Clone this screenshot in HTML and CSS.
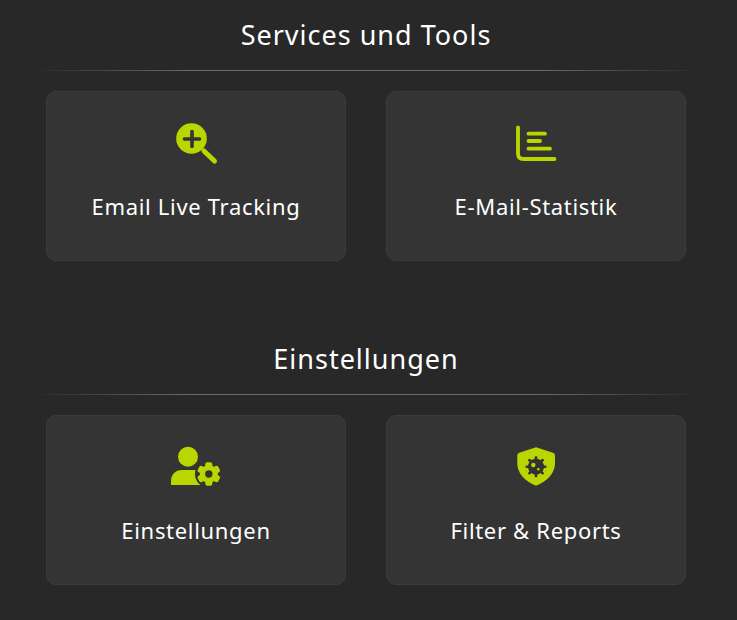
FILE: index.html
```html
<!DOCTYPE html>
<html lang="de">
<head>
<meta charset="utf-8">
<title>Services und Tools</title>
<link rel="stylesheet" href="styles.css">
</head>
<body>
<main class="page">
  <section class="section">
    <h2 class="title">Services und Tools</h2>
    <div class="rule"></div>
    <div class="cards">
      <a class="card">
        <svg class="icon" viewBox="0 0 50 50" width="50" height="50">
          <circle cx="20.500" cy="18.500" r="15.300" fill="#bad600"/>
          <path d="M33 31l10.500 10" stroke="#bad600" stroke-width="5" stroke-linecap="round" fill="none"/>
          <path d="M21 11.500v15M13.500 19h15" stroke="#333" stroke-width="3.600" stroke-linecap="round" fill="none"/>
        </svg>
        <span class="label">Email Live Tracking</span>
      </a>
      <a class="card">
        <svg class="icon" viewBox="0 0 50 50" width="50" height="50">
          <path d="M7 7.500v26q0 5.500 5.500 5.500h31" stroke="#bad600" stroke-width="3.800" stroke-linecap="round" fill="none"/>
          <path d="M17.500 13.700h16.500M17.500 21h11.500M17.500 28.700h21.500" stroke="#bad600" stroke-width="3.800" stroke-linecap="round" fill="none"/>
        </svg>
        <span class="label">E-Mail-Statistik</span>
      </a>
    </div>
  </section>
  <section class="section">
    <h2 class="title">Einstellungen</h2>
    <div class="rule"></div>
    <div class="cards">
      <a class="card">
        <svg class="icon" viewBox="0 0 50 50" width="50" height="50">
          <circle cx="17" cy="12.700" r="10" fill="#bad600"/>
          <path d="M0 41v-4c0-6.500 4.500-11 11-11h12c4 0 7 1 9 3v12z" fill="#bad600"/>
          <circle cx="37.800" cy="30" r="13.800" fill="#333"/>
          <g fill="#bad600">
            <circle cx="37.800" cy="30" r="9"/>
            <rect x="34.300" y="18.200" width="7" height="23.600" rx="2"/>
            <rect x="34.300" y="18.200" width="7" height="23.600" rx="2" transform="rotate(60 37.800 30)"/>
            <rect x="34.300" y="18.200" width="7" height="23.600" rx="2" transform="rotate(120 37.800 30)"/>
          </g>
          <circle cx="37.800" cy="30" r="3.700" fill="#333"/>
        </svg>
        <span class="label">Einstellungen</span>
      </a>
      <a class="card">
        <svg class="icon" viewBox="0 0 50 50" width="50" height="50">
          <path d="M25 3.300l17 5.400q2 .7 2 2.800v7.500c0 10-7 18-19 22.700C13 37 6.300 29 6.300 19v-7.500q0-2.100 2-2.800z" fill="#bad600"/>
          <g fill="#333">
            <circle cx="25" cy="22.700" r="8"/>
            <rect x="23.700" y="12.200" width="2.600" height="21" rx="1"/>
            <rect x="23.700" y="12.200" width="2.600" height="21" rx="1" transform="rotate(45 25 22.700)"/>
            <rect x="23.700" y="12.200" width="2.600" height="21" rx="1" transform="rotate(90 25 22.700)"/>
            <rect x="23.700" y="12.200" width="2.600" height="21" rx="1" transform="rotate(135 25 22.700)"/>
          </g>
          <circle cx="22.300" cy="21" r="2.200" fill="#bad600"/>
          <circle cx="27.300" cy="25.300" r="1.300" fill="#bad600"/>
        </svg>
        <span class="label">Filter &amp; Reports</span>
      </a>
    </div>
  </section>
</main>
</body>
</html>
```
FILE: styles.css
```css
html, body {
  margin: 0;
  padding: 0;
  height: 620px;
  overflow: hidden;
  background: #282828;
}
.page {
  width: 732px;
  display: flex;
  flex-direction: column;
  gap: 34px;
  padding-top: 14px;
  font-family: "Noto Sans", sans-serif;
  color: #fff;
}
.section {
  display: flex;
  flex-direction: column;
  height: 290px;
}
.title {
  margin: 0;
  height: 42px;
  line-height: 42px;
  text-align: center;
  font-size: 27px;
  font-weight: 400;
  letter-spacing: 1px;
}
.rule {
  height: 1px;
  margin: 14px 30px 0;
  background: linear-gradient(90deg, rgba(255,255,255,0), rgba(255,255,255,.32) 25%, rgba(255,255,255,.32) 75%, rgba(255,255,255,0));
}
.cards {
  display: grid;
  grid-template-columns: 300px 300px;
  gap: 40px;
  justify-content: center;
  margin-top: 20px;
}
.card {
  box-sizing: border-box;
  height: 170px;
  display: flex;
  flex-direction: column;
  align-items: center;
  padding-top: 28px;
  background: #343434;
  border: 1px solid #3c3c3c;
  border-radius: 10px;
}
.icon {
  display: block;
}
.label {
  margin-top: 20px;
  line-height: 32px;
  font-size: 22px;
  letter-spacing: .68px;
}
```
